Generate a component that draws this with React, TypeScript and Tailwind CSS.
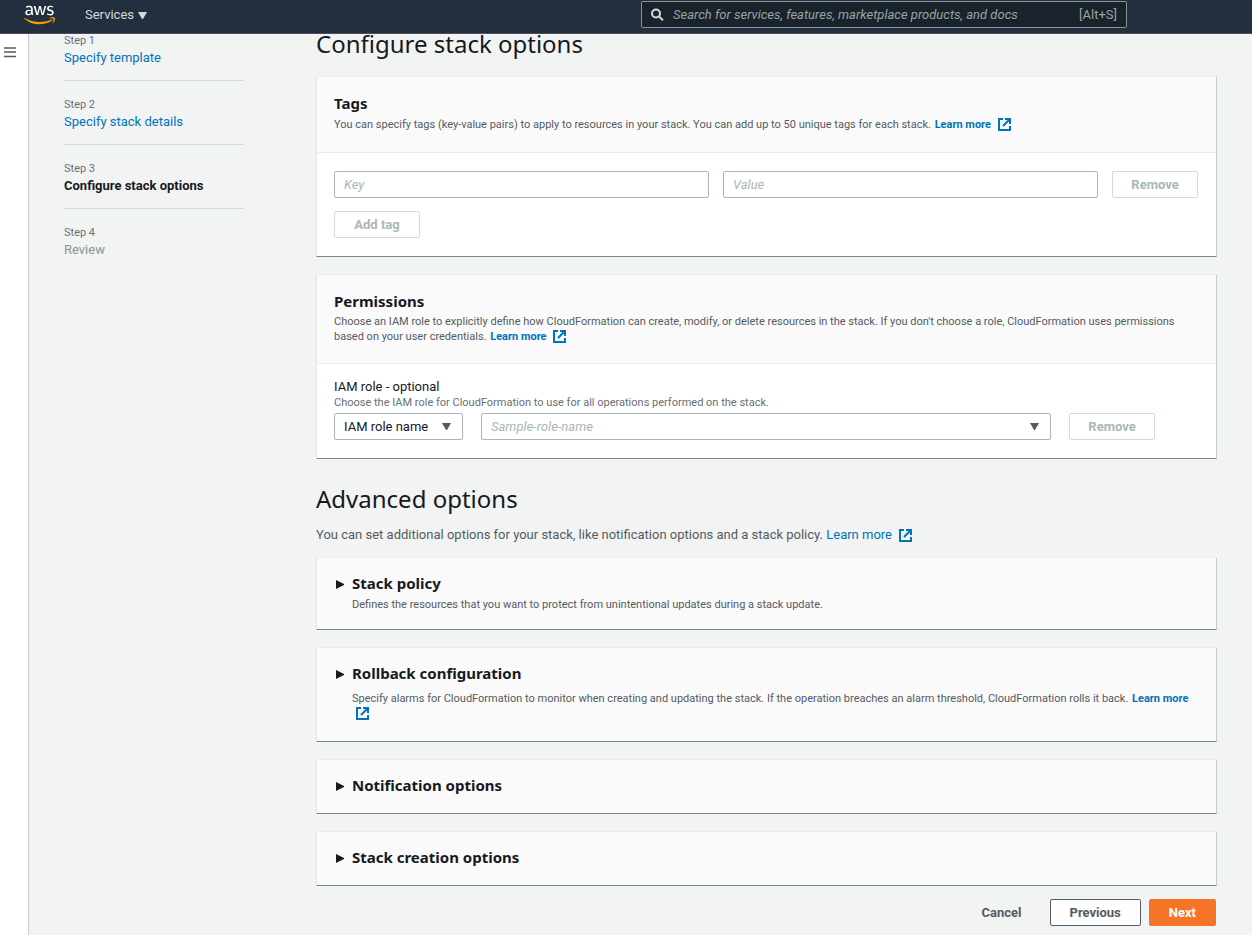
import type { ReactNode } from "react";
import { FaAws } from "react-icons/fa";

const STEPS = [
  { label: "Step 1", title: "Specify template", state: "done" },
  { label: "Step 2", title: "Specify stack details", state: "done" },
  { label: "Step 3", title: "Configure stack options", state: "current" },
  { label: "Step 4", title: "Review", state: "upcoming" },
];

const CARD =
  "rounded-[1px] border border-t-[#eaeded] border-r-[#c6cdcd] border-b-[#76878a] border-l-[#e1e5e5]";
const FIELD =
  "h-[27px] w-full rounded-[2px] border border-[#aab7b8] bg-white px-[9px] text-[13px] outline-none focus:border-[#0073bb]";
const BUTTON =
  "h-[27px] shrink-0 rounded-[2px] border text-[13px] leading-[25px] font-bold whitespace-nowrap";

function ExternalIcon() {
  return (
    <svg viewBox="0 0 13 13" className="ml-1 inline-block h-[13px] w-[13px] align-[-3px]" fill="none" stroke="currentColor" aria-hidden="true">
      <path d="M5 1H1v11h11V8" strokeWidth="2" />
      <path d="M7 1h5v5M12 1 5 8" strokeWidth="2" />
    </svg>
  );
}

function LearnMore({ bold = true }: { bold?: boolean }) {
  return (
    <a href="#learn-more" className={bold ? "ml-px font-bold text-[#0073bb]" : "text-[#0073bb]"}>
      Learn more <ExternalIcon />
    </a>
  );
}

function DownArrow({ className }: { className: string }) {
  return (
    <svg viewBox="0 0 9 7" className={className} fill="currentColor" aria-hidden="true">
      <path d="M0 0h9L5 7H4z" />
    </svg>
  );
}

function DisabledButton({ children }: { children: ReactNode }) {
  return (
    <button type="button" disabled className={`${BUTTON} min-w-[86px] border-[#d5dbdb] bg-white px-[17px] text-[#aab7b8]`}>
      {children}
    </button>
  );
}

function CardHeader({ title, children }: { title: string; children: ReactNode }) {
  return (
    <div className="border-b border-[#eaeded] bg-[#fafafa] pt-[15px] pr-[18px] pb-[19px] pl-[17px]">
      <h2 className="mb-[2px] font-['Noto_Sans',sans-serif] text-[15px] leading-[22px] font-bold">{title}</h2>
      {children}
    </div>
  );
}

function Expandable({ title, children }: { title: string; children?: ReactNode }) {
  return (
    <details className={`${CARD} bg-[#fafafa]`}>
      <summary className="flex cursor-pointer list-none pt-[14px] pr-[18px] pb-[17px] pl-[19px]">
        <svg viewBox="0 0 8 9" className="mt-2 mr-2 h-[9px] w-2 shrink-0" fill="#16191f" aria-hidden="true">
          <path d="M0 0l8 4v1L0 9z" />
        </svg>
        <div className="min-w-0 flex-1">
          <h3 className="font-['Noto_Sans',sans-serif] text-[15px] leading-[22px] font-bold">{title}</h3>
          {children}
        </div>
      </summary>
    </details>
  );
}

export default function App() {
  return (
    <div className="flex min-h-screen flex-col bg-[#f2f3f3] font-[Roboto,sans-serif] text-[13px] leading-[18px] text-[#16191f]">
      <header className="relative z-10 flex h-[34px] items-start border-b border-[#4a4f5c] bg-[#232f3e] text-[#d5dbdb]">
        <svg className="absolute h-0 w-0" aria-hidden="true">
          <linearGradient id="aws-mark" x1="0" y1="0" x2="0" y2="1">
            <stop offset="0.62" stopColor="#ffffff" />
            <stop offset="0.62" stopColor="#ff9900" />
          </linearGradient>
        </svg>
        <a href="#home" aria-label="AWS" className="mt-[2px] ml-6">
          <FaAws fill="url(#aws-mark)" className="h-[26px] w-[31px]" />
        </a>
        <button type="button" className="mt-[6px] ml-[30px] flex items-center gap-1 text-[13px]">
          Services <DownArrow className="h-[7px] w-[9px]" />
        </button>
        <label className="mt-px mr-[125px] ml-auto flex h-[27px] w-[486px] items-center rounded-[2px] border border-[#879596] bg-[#1a222b] px-[9px]">
          <svg viewBox="0 0 13 13" className="mr-[9px] h-[13px] w-[13px]" fill="none" stroke="currentColor" strokeWidth="2" aria-hidden="true">
            <circle cx="5" cy="5.5" r="4" />
            <path d="M8 8.6 12 12.2" />
          </svg>
          <input
            type="search"
            aria-label="Search"
            placeholder="Search for services, features, marketplace products, and docs"
            className="min-w-0 flex-1 bg-transparent text-[13px] outline-none placeholder:text-[#95a5a6] placeholder:italic"
          />
          <span className="text-[13px] text-[#95a5a6]">[Alt+S]</span>
        </label>
      </header>

      <div className="flex flex-1">
        <div className="w-[29px] shrink-0 border-r border-[#c9cccf] bg-white pt-3 pl-1">
          <button type="button" aria-label="Open navigation" className="block">
            <svg viewBox="0 0 12 12" className="h-3 w-3" stroke="#545b64" strokeWidth="2" aria-hidden="true">
              <path d="M0 2h12M0 6h12M0 10.5h12" strokeWidth="1.6" />
            </svg>
          </button>
        </div>

        <nav aria-label="Steps" className="-mt-[17px] ml-[35px] w-[180px] shrink-0">
          <ol>
            {STEPS.map((step) => (
              <li key={step.label} className="border-b border-[#d0dad9] pt-[15px] pb-[13px] last:border-b-0">
                <p className="text-[11px] leading-[17px] text-[#687078]">{step.label}</p>
                {step.state === "done" && (
                  <a href="#step" className="block text-[#0073bb]">{step.title}</a>
                )}
                {step.state === "current" && <p className="font-bold">{step.title}</p>}
                {step.state === "upcoming" && <p className="text-[#879596]">{step.title}</p>}
              </li>
            ))}
          </ol>
        </nav>

        <main className="-mt-2 mr-[35px] ml-[72px] min-w-0 flex-1 pb-2">
          <h1 className="mb-[15px] font-['Noto_Sans',sans-serif] text-[24px] leading-[35px]">Configure stack options</h1>

          <section className={`${CARD} mb-[17px] bg-white`}>
            <CardHeader title="Tags">
              <p className="text-[11px] leading-[17px] text-[#545b64]">
                You can specify tags (key-value pairs) to apply to resources in your stack. You can add up to 50 unique
                tags for each stack. <LearnMore />
              </p>
            </CardHeader>
            <div className="pt-[18px] pr-[18px] pb-[18px] pl-[17px]">
              <div className="mb-[13px] flex gap-[14px]">
                <input aria-label="Key" placeholder="Key" className={`${FIELD} min-w-0 flex-1 placeholder:text-[#aab7b8] placeholder:italic`} />
                <input aria-label="Value" placeholder="Value" className={`${FIELD} min-w-0 flex-1 placeholder:text-[#aab7b8] placeholder:italic`} />
                <DisabledButton>Remove</DisabledButton>
              </div>
              <DisabledButton>Add tag</DisabledButton>
            </div>
          </section>

          <section className={`${CARD} bg-white`}>
            <CardHeader title="Permissions">
              <p className="text-[11px] leading-[15px] text-[#545b64]">
                Choose an IAM role to explicitly define how CloudFormation can create, modify, or delete resources in
                the stack. If you don't choose a role, CloudFormation uses permissions based on your user credentials.{" "}
                <LearnMore />
              </p>
            </CardHeader>
            <div className="pt-[14px] pr-[18px] pb-[18px] pl-[17px]">
              <label htmlFor="role-name" className="block leading-[17px]">IAM role - optional</label>
              <p className="text-[11px] leading-[15px] text-[#687078]">
                Choose the IAM role for CloudFormation to use for all operations performed on the stack.
              </p>
              <div className="mt-[3px] flex gap-[18px] pr-[43px]">
                <div className="relative w-[129px] shrink-0">
                  <select aria-label="Role type" className={`${FIELD} appearance-none`}>
                    <option>IAM role name</option>
                  </select>
                  <DownArrow className="pointer-events-none absolute top-[10px] right-3 h-[7px] w-[9px] text-[#545b64]" />
                </div>
                <div className="relative min-w-0 flex-1">
                  <select id="role-name" className={`${FIELD} appearance-none text-[#aab7b8] italic`}>
                    <option>Sample-role-name</option>
                  </select>
                  <DownArrow className="pointer-events-none absolute top-[10px] right-3 h-[7px] w-[9px] text-[#545b64]" />
                </div>
                <DisabledButton>Remove</DisabledButton>
              </div>
            </div>
          </section>

          <h1 className="mt-[22px] mb-[10px] font-['Noto_Sans',sans-serif] text-[24px] leading-[35px]">Advanced options</h1>
          <p className="mb-[13px] text-[#545b64]">
            You can set additional options for your stack, like notification options and a stack policy.{" "}
            <LearnMore bold={false} />
          </p>

          <div className="flex flex-col gap-[17px]">
            <Expandable title="Stack policy">
              <p className="mt-[3px] text-[11px] leading-[15px] text-[#545b64]">
                Defines the resources that you want to protect from unintentional updates during a stack update.
              </p>
            </Expandable>
            <Expandable title="Rollback configuration">
              <p className="mt-[7px] mb-[3px] text-[11px] leading-[15px] text-[#545b64]">
                Specify alarms for CloudFormation to monitor when creating and updating the stack. If the operation
                breaches an alarm threshold, CloudFormation rolls it back. <LearnMore />
              </p>
            </Expandable>
            <Expandable title="Notification options" />
            <Expandable title="Stack creation options" />
          </div>

          <div className="mt-[13px] mr-px flex justify-end gap-2">
            <button type="button" className={`${BUTTON} border-transparent px-[19px] text-[#545b64]`}>Cancel</button>
            <button type="button" className={`${BUTTON} border-[#545b64] bg-white px-[19px] text-[#545b64]`}>Previous</button>
            <button type="button" className={`${BUTTON} border-[#f67428] bg-[#f67428] px-[19px] text-white`}>Next</button>
          </div>
        </main>
      </div>
    </div>
  );
}
